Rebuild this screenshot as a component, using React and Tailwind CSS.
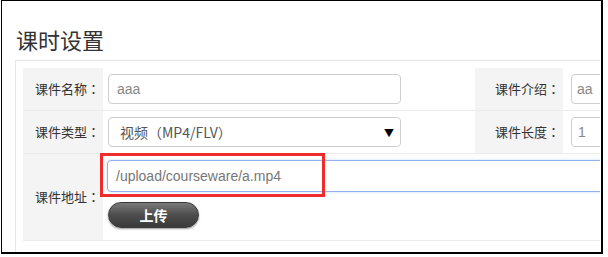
function Label({ text }) {
  return (
    <div className="flex items-center justify-end pr-[3px] bg-[#f4f4f4] border-b border-[#ececec]">
      {text}
      <span style={{ fontFamily: '"Noto Sans CJK TC", sans-serif' }}>：</span>
    </div>
  );
}

export default function App() {
  const cjk = { fontFamily: '"Noto Sans CJK SC", "Liberation Sans", sans-serif' };
  const latin = { fontFamily: '"Liberation Sans", "Noto Sans CJK SC", sans-serif' };

  return (
    <div className="w-[608px] h-[257px] bg-white" style={cjk}>
      <div className="relative ml-[1px] w-[602px] h-[254px] border-l border-t border-r-2 border-b-2 border-black overflow-hidden">
        <div className="mr-[1px] h-full overflow-hidden">
          <h1 className="pl-[14px] pt-[23px] text-[22px] leading-[30px] text-[#333] font-normal">课时设置</h1>

          <div className="ml-[13px] mt-[6px] w-[640px] border border-[#e6e6e6] p-[7px] pb-[20px]">
            <div className="grid grid-cols-[80px_372px_88px_1fr] text-[13px] text-[#333]">
              {/* row 1 */}
              <Label text="课件名称" />
              <div className="pl-[5px] py-[6px] border-b border-[#ececec]">
                <div className="w-[293px] h-[30px] flex items-center pl-[8px] border border-[#cfcfcf] rounded-[4px] text-[14px] text-[#888]" style={latin}>aaa</div>
              </div>
              <Label text="课件介绍" />
              <div className="pl-[8px] py-[6px] border-b border-[#ececec]">
                <div className="w-[200px] h-[30px] flex items-center pl-[5px] border border-[#cfcfcf] rounded-[4px] text-[14px] text-[#888]" style={latin}>aa</div>
              </div>

              {/* row 2 */}
              <Label text="课件类型" />
              <div className="pl-[5px] py-[6px] border-b border-[#ececec]">
                <div className="w-[293px] h-[30px] flex items-center justify-between pl-[11px] pr-[6px] border border-[#cfcfcf] rounded-[4px] text-[14px] text-[#555]">
                  <span>视频（MP4/FLV）</span>
                  <span className="text-[10px] text-black">▼</span>
                </div>
              </div>
              <Label text="课件长度" />
              <div className="pl-[8px] py-[6px] border-b border-[#ececec]">
                <div className="w-[200px] h-[30px] flex items-center pl-[6px] border border-[#cfcfcf] rounded-[4px] text-[14px] text-[#888]" style={latin}>1</div>
              </div>

              {/* row 3 */}
              <Label text="课件地址" />
              <div className="col-span-3 pl-[4px] pt-[6px] pb-[12px] border-b border-[#ececec]">
                <div className="h-[32px] flex items-center pl-[8px] border border-[#8fb0ea] rounded-l-[4px] text-[14px] text-[#777] shadow-[0_0_3px_rgba(120,160,230,0.4)]" style={latin}>/upload/courseware/a.mp4</div>
                <button className="mt-[10px] ml-[1px] w-[91px] h-[26px] rounded-full border border-[#3a3a3a] bg-gradient-to-b from-[#7a7a7a] via-[#4d4d4d] to-[#3a3a3a] text-white text-[14px] font-bold shadow-[0_1px_2px_rgba(0,0,0,0.4)]">
                  上传
                </button>
              </div>
            </div>
          </div>
        </div>

        {/* red annotation box */}
        <div className="absolute left-[98px] top-[152px] w-[225px] h-[44px] border-[3px] border-[#ef2b2b]" />
      </div>
    </div>
  );
}
